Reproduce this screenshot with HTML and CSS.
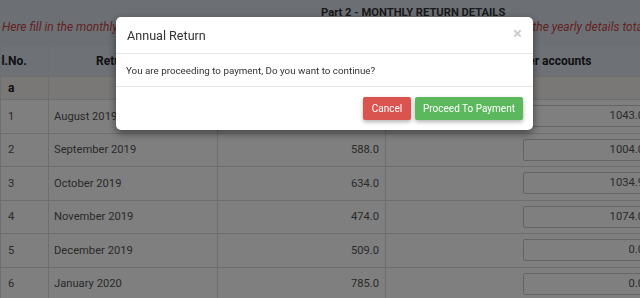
FILE: index.html
```html
<!DOCTYPE html>
<html>
<head>
<meta charset="utf-8">
<link rel="stylesheet" href="styles.css">
</head>
<body>
<div class="page">
  <h4 class="part-title">Part 2 - MONTHLY RETURN DETAILS</h4>
  <p class="hint">Here fill in the monthly return details as filed for each month of the financial year 2019 - 2020 and fill in the yearly details total</p>
  <table class="grid">
    <colgroup>
      <col class="c1"><col class="c2"><col class="c3"><col class="c4">
    </colgroup>
    <thead>
      <tr class="head">
        <th class="sl">Sl.No.</th>
        <th class="ctr">Return Month</th>
        <th class="ctr">Turnover as per returns</th>
        <th class="ctr">Turnover as per accounts</th>
      </tr>
      <tr class="letters">
        <th class="sl-a">a</th>
        <th class="ctr">b</th>
        <th class="ctr">c</th>
        <th class="ctr">d</th>
      </tr>
    </thead>
    <tbody>
      <tr><td class="num">1</td><td class="mon">August 2019</td><td class="amt">611.0</td><td class="inp"><div class="field">1043.0</div></td></tr>
      <tr><td class="num">2</td><td class="mon">September 2019</td><td class="amt">588.0</td><td class="inp"><div class="field">1004.0</div></td></tr>
      <tr><td class="num">3</td><td class="mon">October 2019</td><td class="amt">634.0</td><td class="inp"><div class="field">1034.9</div></td></tr>
      <tr><td class="num">4</td><td class="mon">November 2019</td><td class="amt">474.0</td><td class="inp"><div class="field">1074.0</div></td></tr>
      <tr><td class="num">5</td><td class="mon">December 2019</td><td class="amt">509.0</td><td class="inp"><div class="field">0.0</div></td></tr>
      <tr><td class="num">6</td><td class="mon">January 2020</td><td class="amt">785.0</td><td class="inp"><div class="field">0.0</div></td></tr>
    </tbody>
  </table>
</div>
<div class="backdrop"></div>
<div class="modal">
  <div class="modal-header">
    <span class="modal-title">Annual Return</span>
    <span class="close">&times;</span>
  </div>
  <div class="modal-body">You are proceeding to payment, Do you want to continue?</div>
  <div class="modal-footer">
    <button class="btn btn-cancel">Cancel</button>
    <button class="btn btn-go">Proceed To Payment</button>
  </div>
</div>
</body>
</html>
```
FILE: styles.css
```css
html, body {
  margin: 0;
  padding: 0;
  width: 640px;
  height: 298px;
  overflow: hidden;
  background: #d8e1ea;
  font-family: Roboto, "Liberation Sans", Arial, sans-serif;
}
.page {
  padding-top: 6px;
  width: 660px;
}
.part-title {
  margin: 0;
  font-size: 11.2px;
  line-height: 14px;
  font-weight: bold;
  color: #333;
  padding-left: 321px;
}
.hint {
  margin: 0;
  font-size: 12px;
  line-height: 14px;
  font-style: italic;
  color: #c84444;
  padding-left: 2px;
  white-space: nowrap;
}
.grid {
  margin-top: 12px;
  border-collapse: collapse;
  table-layout: fixed;
  width: 660px;
  font-size: 11.2px;
  color: #555;
}
.c1 { width: 48px; }
.c2 { width: 169px; }
.c3 { width: 168px; }
.c4 { width: 275px; }
.grid th, .grid td {
  border: 1px solid #dcdcdc;
  padding: 0 7px;
  white-space: nowrap;
  overflow: hidden;
}
.grid th { color: #222; font-weight: bold; font-size: 12px; }
.head th {
  height: 30px;
  background: #dce4ec;
  border-top: none;
}
.head th.sl { padding-left: 0; text-indent: -7px; text-align: left; }
.ctr { text-align: center; }
.letters th {
  height: 22px;
  background: #f4f0ec;
}
.letters th.sl-a { text-align: left; padding-left: 7px; }
.letters th.ctr { color: transparent; }
tbody tr { height: 33.5px; background: #fff; }
.grid td.num { padding-left: 7px; }
.grid td.mon { padding-left: 5px; }
.grid td.amt { text-align: right; padding-right: 6px; }
.grid td.inp { padding: 0 0 0 137px; }
.field {
  width: 120px;
  height: 20px;
  border: 1px solid #c8c8c8;
  border-radius: 2px;
  text-align: right;
  line-height: 20px;
  padding-right: 6px;
  font-size: 11.2px;
  color: #555;
}
.backdrop {
  position: fixed;
  inset: 0;
  background: rgba(0, 0, 0, 0.5);
}
.modal {
  position: fixed;
  top: 17px;
  left: 116px;
  width: 417px;
  background: #fff;
  border-radius: 5px;
  box-shadow: 0 3px 9px rgba(0, 0, 0, 0.5);
}
.modal-header {
  display: flex;
  align-items: center;
  justify-content: space-between;
  height: 36px;
  padding: 0 11px 0 11px;
  border-bottom: 1px solid #e5e5e5;
}
.modal-title {
  font-size: 12.6px;
  color: #333;
}
.close {
  font-size: 17px;
  font-weight: bold;
  color: #000;
  opacity: 0.2;
  line-height: 1;
  margin-top: -3px;
}
.modal-body {
  height: 32px;
  padding: 0 10px;
  display: flex;
  align-items: center;
  font-size: 9.8px;
  color: #333;
  border-bottom: 1px solid #e5e5e5;
}
.modal-footer {
  display: flex;
  justify-content: flex-end;
  gap: 4px;
  padding: 10px 10px 10px 10px;
}
.btn {
  height: 23px;
  border: none;
  border-radius: 2px;
  color: #fff;
  font-family: Roboto, "Liberation Sans", Arial, sans-serif;
  font-size: 10px;
  padding: 0;
  white-space: nowrap;
  box-shadow: 0 2px 4px rgba(0, 0, 0, 0.3);
}
.btn-cancel { background: #d9534f; width: 48px; }
.btn-go { background: #5cb85c; width: 108px; }
```
